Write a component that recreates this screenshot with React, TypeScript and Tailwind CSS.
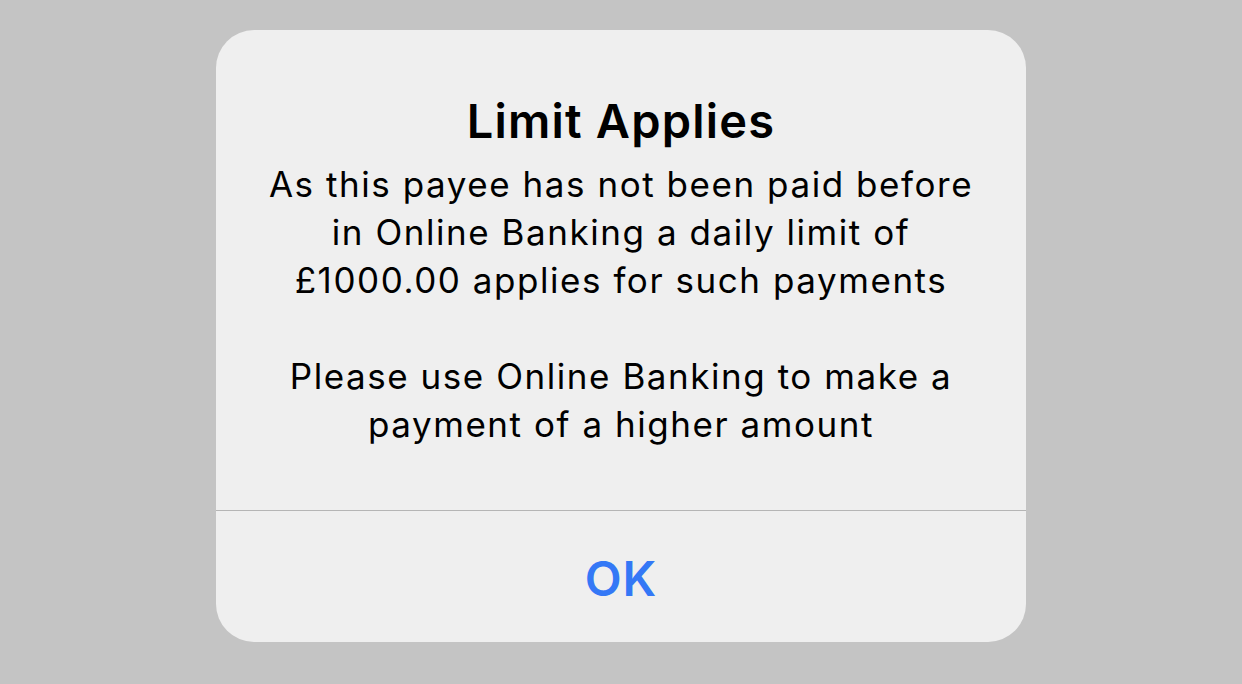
export default function App() {
  return (
    <div className="flex h-[684px] w-full items-start justify-center bg-[#c4c4c4] pt-[30px] font-['Inter','Noto_Sans',sans-serif] text-black">
      <div className="flex h-[612px] w-[810px] flex-col overflow-hidden rounded-[38px] bg-[#efefef]">
        <div className="flex flex-col items-center px-6 pt-[63px] pb-[62px] text-center">
          <h1 className="text-[47px] font-semibold leading-[56px] tracking-[1.2px]">Limit Applies</h1>
          <div className="mt-[11px] text-[35px] leading-[48px] tracking-[1.55px]">
            <p>As this payee has not been paid before</p>
            <p>in Online Banking a daily limit of</p>
            <p>£1000.00 applies for such payments</p>
            <p>&nbsp;</p>
            <p>Please use Online Banking to make a</p>
            <p>payment of a higher amount</p>
          </div>
        </div>
        <div className="h-px bg-[#b5b5b5]" />
        <button
          type="button"
          className="flex flex-1 items-center justify-center pt-[4px] text-[48px] font-semibold tracking-[1px] text-[#3478f6]"
        >
          OK
        </button>
      </div>
    </div>
  )
}
